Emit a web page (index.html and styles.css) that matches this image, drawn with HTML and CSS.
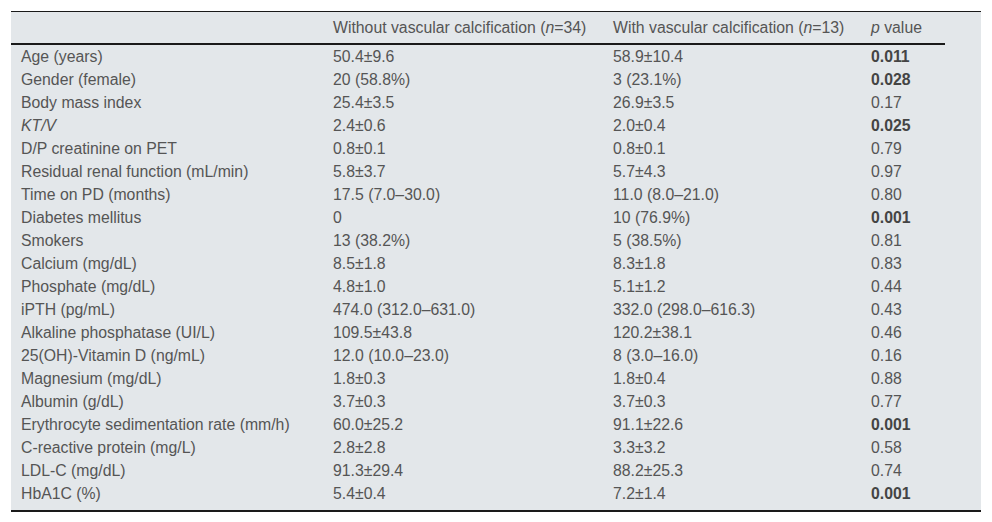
FILE: index.html
```html
<!DOCTYPE html>
<html>
<head>
<meta charset="utf-8">
<link rel="stylesheet" href="styles.css">
</head>
<body>
<div class="wrap">
<table class="data">
<colgroup>
<col class="c1"><col class="c2"><col class="c3"><col class="c4">
</colgroup>
<thead>
<tr><th></th><th>Without vascular calcification (<i>n</i>=34)</th><th>With vascular calcification (<i>n</i>=13)</th><th><i>p</i> value</th></tr>
</thead>
<tbody>
<tr><td>Age (years)</td><td>50.4±9.6</td><td>58.9±10.4</td><td><b>0.011</b></td></tr>
<tr><td>Gender (female)</td><td>20 (58.8%)</td><td>3 (23.1%)</td><td><b>0.028</b></td></tr>
<tr><td>Body mass index</td><td>25.4±3.5</td><td>26.9±3.5</td><td>0.17</td></tr>
<tr><td><i>KT/V</i></td><td>2.4±0.6</td><td>2.0±0.4</td><td><b>0.025</b></td></tr>
<tr><td>D/P creatinine on PET</td><td>0.8±0.1</td><td>0.8±0.1</td><td>0.79</td></tr>
<tr><td>Residual renal function (mL/min)</td><td>5.8±3.7</td><td>5.7±4.3</td><td>0.97</td></tr>
<tr><td>Time on PD (months)</td><td>17.5 (7.0–30.0)</td><td>11.0 (8.0–21.0)</td><td>0.80</td></tr>
<tr><td>Diabetes mellitus</td><td>0</td><td>10 (76.9%)</td><td><b>0.001</b></td></tr>
<tr><td>Smokers</td><td>13 (38.2%)</td><td>5 (38.5%)</td><td>0.81</td></tr>
<tr><td>Calcium (mg/dL)</td><td>8.5±1.8</td><td>8.3±1.8</td><td>0.83</td></tr>
<tr><td>Phosphate (mg/dL)</td><td>4.8±1.0</td><td>5.1±1.2</td><td>0.44</td></tr>
<tr><td>iPTH (pg/mL)</td><td>474.0 (312.0–631.0)</td><td>332.0 (298.0–616.3)</td><td>0.43</td></tr>
<tr><td>Alkaline phosphatase (UI/L)</td><td>109.5±43.8</td><td>120.2±38.1</td><td>0.46</td></tr>
<tr><td>25(OH)-Vitamin D (ng/mL)</td><td>12.0 (10.0–23.0)</td><td>8 (3.0–16.0)</td><td>0.16</td></tr>
<tr><td>Magnesium (mg/dL)</td><td>1.8±0.3</td><td>1.8±0.4</td><td>0.88</td></tr>
<tr><td>Albumin (g/dL)</td><td>3.7±0.3</td><td>3.7±0.3</td><td>0.77</td></tr>
<tr><td>Erythrocyte sedimentation rate (mm/h)</td><td>60.0±25.2</td><td>91.1±22.6</td><td><b>0.001</b></td></tr>
<tr><td>C-reactive protein (mg/L)</td><td>2.8±2.8</td><td>3.3±3.2</td><td>0.58</td></tr>
<tr><td>LDL-C (mg/dL)</td><td>91.3±29.4</td><td>88.2±25.3</td><td>0.74</td></tr>
<tr><td>HbA1C (%)</td><td>5.4±0.4</td><td>7.2±1.4</td><td><b>0.001</b></td></tr>
</tbody>
</table>
</div>
</body>
</html>
```
FILE: styles.css
```css
html, body {
  margin: 0;
  padding: 0;
  background: #ffffff;
}
body {
  padding: 11px 11px 0 11px;
  font-family: "Liberation Sans", Arial, sans-serif;
  font-size: 15.8px;
  color: #555555;
}
.wrap {
  width: 970px;
  background: #e3e7ea;
  border-top: 1px solid #1a1a1a;
  border-bottom: 2px solid #1a1a1a;
  padding-bottom: 5px;
}
.data {
  width: 934px;
  table-layout: fixed;
  border-collapse: collapse;
}
.c1 { width: 312px; }
.c2 { width: 280px; }
.c3 { width: 258px; }
.c4 { width: 84px; }
.data th {
  font-weight: normal;
  text-align: left;
  height: 31px;
  padding: 0 0 0 10px;
  border-bottom: 2px solid #1a1a1a;
  vertical-align: middle;
  white-space: nowrap;
}
.data td {
  height: 23px;
  padding: 0 0 0 10px;
  line-height: 23px;
  white-space: nowrap;
}
.data b {
  color: #444444;
}
```
